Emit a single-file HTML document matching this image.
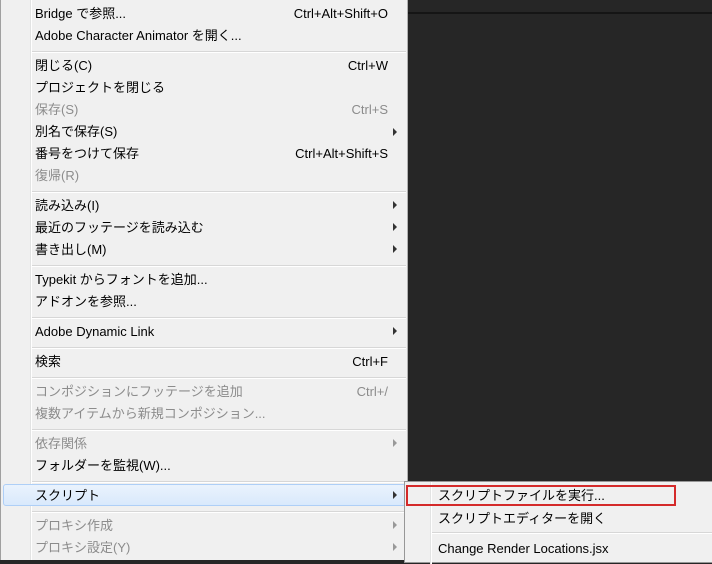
<!DOCTYPE html>
<html><head><meta charset="utf-8"><style>
body{margin:0;width:712px;height:560px;overflow:hidden;background:#262626;position:relative;font-family:"Liberation Sans","Noto Sans CJK JP",sans-serif;font-size:13px;color:#000}
.m{position:absolute;left:0;top:0;width:408px;height:560px;background:#f0f0f0;border-left:1px solid #a0a0a0;border-right:1px solid #b0b0b0;box-sizing:border-box}
.g{position:absolute;left:29px;top:0;width:1px;height:560px;background:#e2e3e3;border-right:1px solid #fff}
.t{position:absolute;left:34px;line-height:16px;white-space:nowrap}
.s{position:absolute;right:19px;line-height:16px;white-space:nowrap}
.d{color:#8c8c8c}
.a{position:absolute;left:392px;width:0;height:0;border-top:4px solid transparent;border-bottom:4px solid transparent;border-left:4px solid #333}
.a.d{border-left-color:#999}
.sep{position:absolute;left:31px;width:374px;height:1px;background:#d7d7d7;border-bottom:1px solid #fff}
.hl{position:absolute;left:2px;top:484px;width:403px;height:22px;border:1px solid #aecff7;border-radius:3px;background:linear-gradient(#eaf3fd,#d9e9fc);box-sizing:border-box}
.sub{position:absolute;left:404px;top:481px;width:310px;height:82px;background:#f0f0f0;border:1px solid #979797;box-sizing:border-box}
</style></head><body>
<div style="position:absolute;left:408px;top:12px;width:304px;height:2px;background:#151515"></div>
<div class="m">
<div class="g"></div>
<div class="hl"></div>
<div class="t" style="top:6px">Bridge で参照...</div><div class="s" style="top:6px">Ctrl+Alt+Shift+O</div>
<div class="t" style="top:28px">Adobe Character Animator を開く...</div>
<div class="sep" style="top:51px"></div>
<div class="t" style="top:58px">閉じる(C)</div><div class="s" style="top:58px">Ctrl+W</div>
<div class="t" style="top:80px">プロジェクトを閉じる</div>
<div class="t d" style="top:102px">保存(S)</div><div class="s d" style="top:102px">Ctrl+S</div>
<div class="t" style="top:124px">別名で保存(S)</div><div class="a" style="top:128px"></div>
<div class="t" style="top:146px">番号をつけて保存</div><div class="s" style="top:146px">Ctrl+Alt+Shift+S</div>
<div class="t d" style="top:168px">復帰(R)</div>
<div class="sep" style="top:191px"></div>
<div class="t" style="top:198px">読み込み(I)</div><div class="a" style="top:201px"></div>
<div class="t" style="top:220px">最近のフッテージを読み込む</div><div class="a" style="top:223px"></div>
<div class="t" style="top:242px">書き出し(M)</div><div class="a" style="top:245px"></div>
<div class="sep" style="top:265px"></div>
<div class="t" style="top:272px">Typekit からフォントを追加...</div>
<div class="t" style="top:294px">アドオンを参照...</div>
<div class="sep" style="top:317px"></div>
<div class="t" style="top:324px">Adobe Dynamic Link</div><div class="a" style="top:327px"></div>
<div class="sep" style="top:347px"></div>
<div class="t" style="top:354px">検索</div><div class="s" style="top:354px">Ctrl+F</div>
<div class="sep" style="top:377px"></div>
<div class="t d" style="top:384px">コンポジションにフッテージを追加</div><div class="s d" style="top:384px">Ctrl+/</div>
<div class="t d" style="top:406px">複数アイテムから新規コンポジション...</div>
<div class="sep" style="top:429px"></div>
<div class="t d" style="top:436px">依存関係</div><div class="a d" style="top:439px"></div>
<div class="t" style="top:458px">フォルダーを監視(W)...</div>
<div class="sep" style="top:481px"></div>
<div class="t" style="top:488px">スクリプト</div><div class="a" style="top:491px"></div>
<div class="sep" style="top:511px"></div>
<div class="t d" style="top:518px">プロキシ作成</div><div class="a d" style="top:521px"></div>
<div class="t d" style="top:540px">プロキシ設定(Y)</div><div class="a d" style="top:543px"></div>
</div>
<div class="sub">
<div style="position:absolute;left:25px;top:0;width:1px;height:82px;background:#e2e3e3;border-right:1px solid #fff"></div>
<div style="position:absolute;left:1px;top:3px;width:270px;height:21px;border:2px solid #d42a2a;box-sizing:border-box"></div>
<div class="t" style="left:33px;top:6px">スクリプトファイルを実行...</div>
<div class="t" style="left:33px;top:29px">スクリプトエディターを開く</div>
<div class="sep" style="left:27px;width:281px;top:50px"></div>
<div class="t" style="left:33px;top:59px">Change Render Locations.jsx</div>
</div>
</body></html>
